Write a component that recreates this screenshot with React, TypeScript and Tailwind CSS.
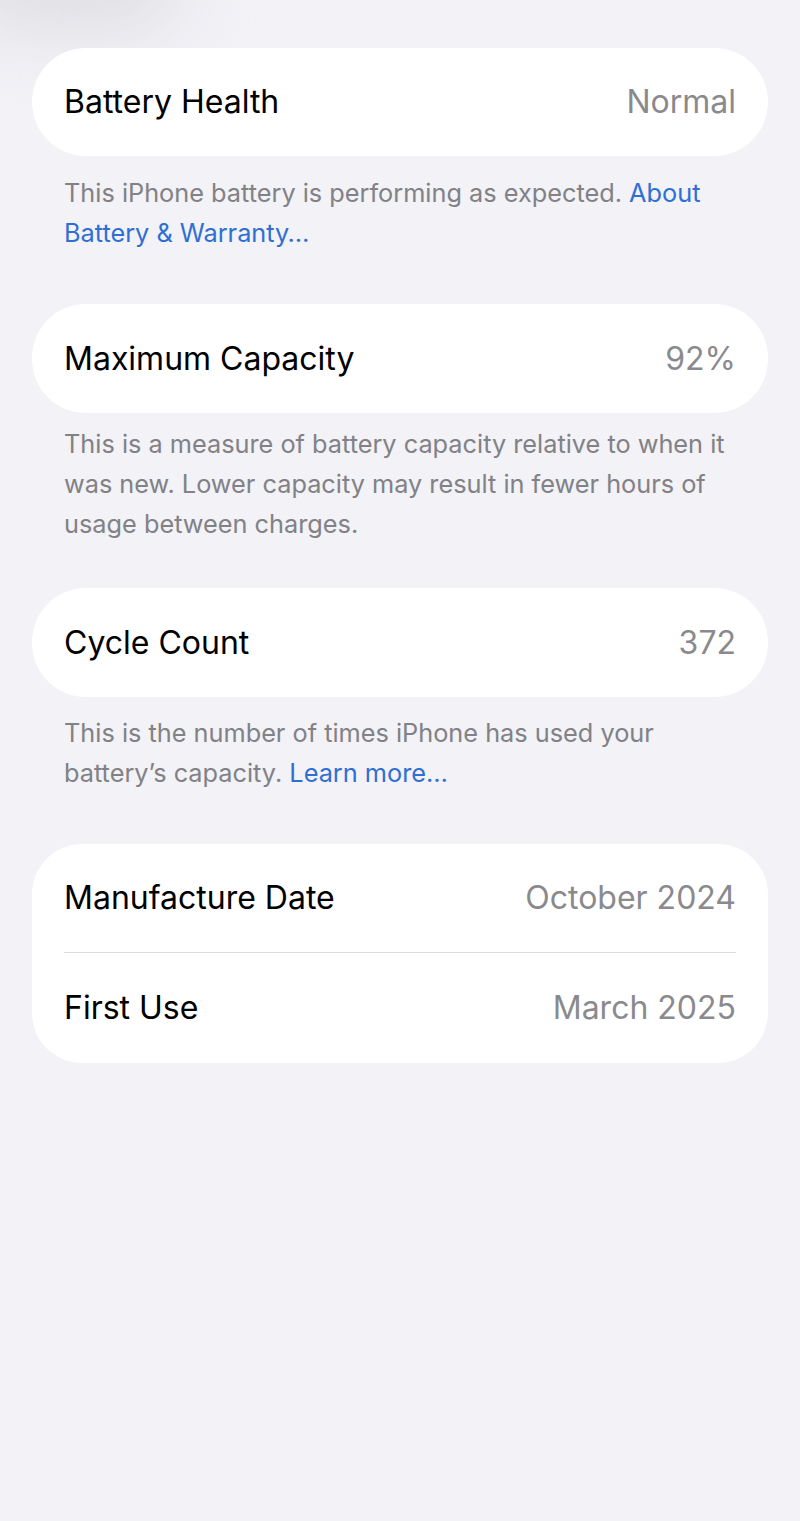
import React from "react";

const font = { fontFamily: "Inter, 'Noto Sans', sans-serif" };

function Row({ label, value, h = "h-[108px]" }: { label: string; value: string; h?: string }) {
  return (
    <div className={`flex ${h} items-center justify-between px-8`}>
      <span className="text-[32px] text-black">{label}</span>
      <span className="text-[32px] text-[#8a8a8e]">{value}</span>
    </div>
  );
}

function Footer({ children, pt }: { children: React.ReactNode; pt: string }) {
  return (
    <div className={`px-8 ${pt} text-[25.3px] leading-[40px] text-[#818186]`}>{children}</div>
  );
}

export default function App() {
  return (
    <div className="relative min-h-[1521px] w-[800px] overflow-hidden bg-[#f2f2f7]" style={font}>
      <div className="absolute -left-10 -top-16 h-[90px] w-[220px] rounded-full bg-[#dcdce0] blur-2xl" />
      <div className="relative px-8 pt-12">
        <div className="rounded-[54px] bg-white">
          <Row label="Battery Health" value="Normal" />
        </div>
        <Footer pt="pt-[17px]">
          This iPhone battery is performing as expected.{" "}
          <span className="text-[#2f6fd3]">About Battery &amp; Warranty…</span>
        </Footer>

        <div className="mt-[51px] rounded-[54px] bg-white">
          <Row label="Maximum Capacity" value="92%" h="h-[109px]" />
        </div>
        <Footer pt="pt-[11px]">
          This is a measure of battery capacity relative to when it was new. Lower capacity may result in fewer hours of usage between charges.
        </Footer>

        <div className="mt-[44px] rounded-[54px] bg-white">
          <Row label="Cycle Count" value="372" h="h-[109px]" />
        </div>
        <Footer pt="pt-[16px]">
          This is the number of times iPhone has used your battery’s capacity.{" "}
          <span className="text-[#2f6fd3]">Learn more…</span>
        </Footer>

        <div className="mt-[51px] rounded-[50px] bg-white">
          <Row label="Manufacture Date" value="October 2024" />
          <div className="mx-8 h-px bg-[#dcdce0]" />
          <Row label="First Use" value="March 2025" h="h-[110px]" />
        </div>
      </div>
    </div>
  );
}
